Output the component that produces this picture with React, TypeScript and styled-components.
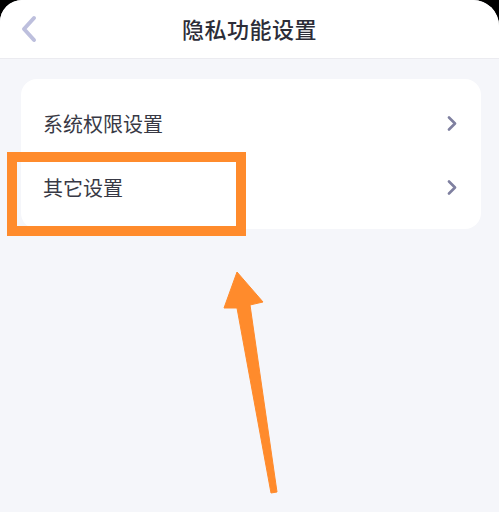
import React from "react";
import styled, { createGlobalStyle } from "styled-components";

const Global = createGlobalStyle`
  html, body { margin: 0; padding: 0; background: #000; }
  body { font-family: "Noto Sans CJK SC", "Noto Sans", sans-serif; }
  #root { width: 499px; height: 512px; }
`;

const Screen = styled.div`
  position: relative;
  width: 499px;
  height: 512px;
  background: #f5f6fa;
  border-radius: 22px 26px 0 0;
  overflow: hidden;
  display: flex;
  flex-direction: column;
`;

const Header = styled.header`
  height: 58px;
  flex: none;
  background: #fff;
  border-bottom: 1px solid #ebebf0;
  display: grid;
  grid-template-columns: 60px 1fr 60px;
  align-items: center;
`;

const BackButton = styled.div`
  display: flex;
  align-items: center;
  padding-left: 20px;
  height: 100%;
`;

const Title = styled.h1`
  margin: 0;
  text-align: center;
  font-size: 22px;
  font-weight: 500;
  color: #2c2d38;
  letter-spacing: 0.5px;
  line-height: 1;
  padding-bottom: 2px;
`;

const Body = styled.main`
  padding: 20px 18px 0 21px;
`;

const Card = styled.section`
  background: #fff;
  border-radius: 16px;
  padding: 12px 0 10px;
`;

const Row = styled.div`
  height: 64px;
  display: flex;
  align-items: center;
  justify-content: space-between;
  padding: 0 24px 0 22px;
`;

const Label = styled.span`
  font-size: 20px;
  color: #383945;
  font-weight: 400;
`;

const Highlight = styled.div`
  position: absolute;
  left: 7px;
  top: 152px;
  width: 219px;
  height: 64px;
  border: 10px solid #ff8b2c;
`;

const ArrowSvg = styled.svg`
  position: absolute;
  left: 0;
  top: 0;
  pointer-events: none;
`;

const Chevron = () => (
  <svg width="10" height="15" viewBox="0 0 10 15">
    <path d="M2 1.5 L8 7.5 L2 13.5" fill="none" stroke="#7f80a0" strokeWidth="2.6" strokeLinecap="round" strokeLinejoin="round" />
  </svg>
);

const items = ["系统权限设置", "其它设置"];

export default function App() {
  return (
    <>
      <Global />
      <Screen>
        <Header>
          <BackButton>
            <svg width="18" height="28" viewBox="0 0 18 28">
              <path d="M14 3 L4 14 L14 25" fill="none" stroke="#bdbfdd" strokeWidth="4" strokeLinecap="round" strokeLinejoin="round" />
            </svg>
          </BackButton>
          <Title>隐私功能设置</Title>
          <div />
        </Header>
        <Body>
          <Card>
            {items.map((t) => (
              <Row key={t}>
                <Label>{t}</Label>
                <Chevron />
              </Row>
            ))}
          </Card>
        </Body>
        <Highlight />
        <ArrowSvg width="499" height="512" viewBox="0 0 499 512">
          <polygon
            points="237,272 263,302 250,305 277,492 271,493 237,308 224,308"
            fill="#ff8b2c"
            stroke="#ff8b2c"
            strokeWidth="1"
            strokeLinejoin="round"
          />
        </ArrowSvg>
      </Screen>
    </>
  );
}
